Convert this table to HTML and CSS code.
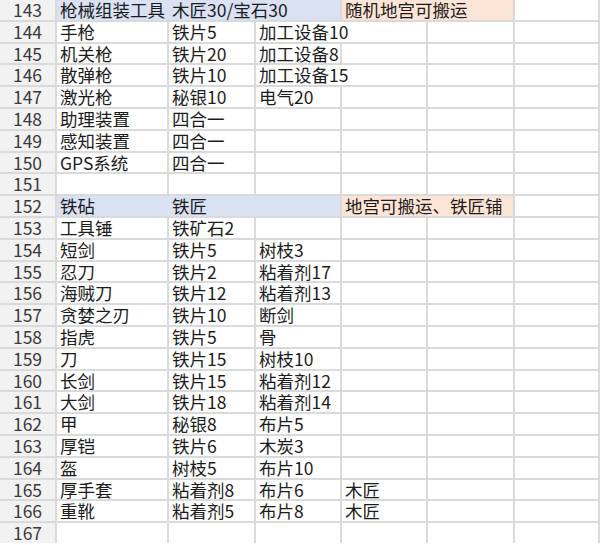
FILE: index.html
```html
<!DOCTYPE html>
<html lang="zh">
<head>
<meta charset="utf-8">
<link rel="stylesheet" href="styles.css">
</head>
<body>
<div class="sheet">
  <div class="h">143</div><div class="c blue s3"><span class="bw">枪械组装工具</span><span>木匠30/宝石30</span></div><div class="c peach s2">随机地宫可搬运</div><div class="c"></div>
  <div class="h">144</div><div class="c">手枪</div><div class="c">铁片5</div><div class="c s2">加工设备10</div><div class="c"></div><div class="c"></div>
  <div class="h">145</div><div class="c">机关枪</div><div class="c">铁片20</div><div class="c">加工设备8</div><div class="c"></div><div class="c"></div><div class="c"></div>
  <div class="h">146</div><div class="c">散弹枪</div><div class="c">铁片10</div><div class="c s2">加工设备15</div><div class="c"></div><div class="c"></div>
  <div class="h">147</div><div class="c">激光枪</div><div class="c">秘银10</div><div class="c">电气20</div><div class="c"></div><div class="c"></div><div class="c"></div>
  <div class="h">148</div><div class="c">助理装置</div><div class="c">四合一</div><div class="c"></div><div class="c"></div><div class="c"></div><div class="c"></div>
  <div class="h">149</div><div class="c">感知装置</div><div class="c">四合一</div><div class="c"></div><div class="c"></div><div class="c"></div><div class="c"></div>
  <div class="h">150</div><div class="c">GPS系统</div><div class="c">四合一</div><div class="c"></div><div class="c"></div><div class="c"></div><div class="c"></div>
  <div class="h">151</div><div class="c"></div><div class="c"></div><div class="c"></div><div class="c"></div><div class="c"></div><div class="c"></div>
  <div class="h">152</div><div class="c blue s3"><span class="bw">铁砧</span><span>铁匠</span></div><div class="c peach s2">地宫可搬运、铁匠铺</div><div class="c"></div>
  <div class="h">153</div><div class="c">工具锤</div><div class="c">铁矿石2</div><div class="c"></div><div class="c"></div><div class="c"></div><div class="c"></div>
  <div class="h">154</div><div class="c">短剑</div><div class="c">铁片5</div><div class="c">树枝3</div><div class="c"></div><div class="c"></div><div class="c"></div>
  <div class="h">155</div><div class="c">忍刀</div><div class="c">铁片2</div><div class="c">粘着剂17</div><div class="c"></div><div class="c"></div><div class="c"></div>
  <div class="h">156</div><div class="c">海贼刀</div><div class="c">铁片12</div><div class="c">粘着剂13</div><div class="c"></div><div class="c"></div><div class="c"></div>
  <div class="h">157</div><div class="c">贪婪之刃</div><div class="c">铁片10</div><div class="c">断剑</div><div class="c"></div><div class="c"></div><div class="c"></div>
  <div class="h">158</div><div class="c">指虎</div><div class="c">铁片5</div><div class="c">骨</div><div class="c"></div><div class="c"></div><div class="c"></div>
  <div class="h">159</div><div class="c">刀</div><div class="c">铁片15</div><div class="c">树枝10</div><div class="c"></div><div class="c"></div><div class="c"></div>
  <div class="h">160</div><div class="c">长剑</div><div class="c">铁片15</div><div class="c">粘着剂12</div><div class="c"></div><div class="c"></div><div class="c"></div>
  <div class="h">161</div><div class="c">大剑</div><div class="c">铁片18</div><div class="c">粘着剂14</div><div class="c"></div><div class="c"></div><div class="c"></div>
  <div class="h">162</div><div class="c">甲</div><div class="c">秘银8</div><div class="c">布片5</div><div class="c"></div><div class="c"></div><div class="c"></div>
  <div class="h">163</div><div class="c">厚铠</div><div class="c">铁片6</div><div class="c">木炭3</div><div class="c"></div><div class="c"></div><div class="c"></div>
  <div class="h">164</div><div class="c">盔</div><div class="c">树枝5</div><div class="c">布片10</div><div class="c"></div><div class="c"></div><div class="c"></div>
  <div class="h">165</div><div class="c">厚手套</div><div class="c">粘着剂8</div><div class="c">布片6</div><div class="c">木匠</div><div class="c"></div><div class="c"></div>
  <div class="h">166</div><div class="c">重靴</div><div class="c">粘着剂5</div><div class="c">布片8</div><div class="c">木匠</div><div class="c"></div><div class="c"></div>
  <div class="h">167</div><div class="c"></div><div class="c"></div><div class="c"></div><div class="c"></div><div class="c"></div><div class="c"></div>
</div>
</body>
</html>
```
FILE: styles.css
```css
html, body {
  margin: 0;
  padding: 0;
  background: #ffffff;
  overflow: hidden;
}
.sheet {
  width: 600px;
  box-sizing: border-box;
  padding-right: 2px;
  display: grid;
  grid-template-columns: 55px 110px 85px 84px 84px 85px 83px;
  grid-auto-rows: 19.8px;
  gap: 2px;
  background: #dadada;
  font-family: "Noto Sans CJK SC", "Noto Sans", sans-serif;
  font-size: 17.5px;
  color: #1c1c1c;
}
.h {
  background: #f2f2f2;
  color: #3a3a3a;
  text-align: center;
  line-height: 19.8px;
}
.c {
  background: #ffffff;
  padding-left: 3px;
  line-height: 19.8px;
  white-space: nowrap;
  overflow: visible;
  display: flex;
}
.s2 { grid-column: span 2; }
.s3 { grid-column: span 3; }
.blue { background: #d9e1f2; }
.peach { background: #fce4d6; }
.bw { width: 112px; flex: none; }
```
